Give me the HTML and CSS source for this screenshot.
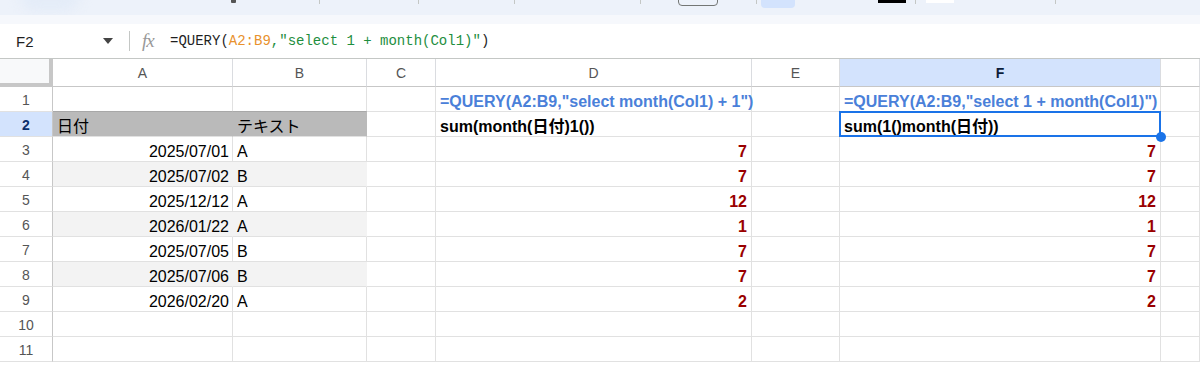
FILE: index.html
```html
<!DOCTYPE html>
<html lang="ja">
<head>
    <meta charset="UTF-8">
    <meta name="viewport" content="width=device-width, initial-scale=1.0">
    <title>QUERY month test</title>
    <link rel="stylesheet" href="styles.css">
</head>
<body>

<div class="toolbar">
    <span class="tb-glow"></span>
    <span class="tb-mark" style="left:231px"></span>
    <span class="tb-sep" style="left:319px"></span>
    <span class="tb-sep" style="left:418px"></span>
    <span class="tb-sep" style="left:514px"></span>
    <span class="tb-sep" style="left:640px"></span>
    <span class="tb-box" style="left:678px"></span>
    <span class="tb-sep" style="left:756px"></span>
    <span class="tb-active" style="left:761px"></span>
    <span class="tb-color" style="left:878px"></span>
    <span class="tb-sep" style="left:915px"></span>
    <span class="tb-white" style="left:926px"></span>
    <span class="tb-sep" style="left:1055px"></span>
</div>
<div class="toolbar-band"></div>

<div class="formula-bar">
    <div class="name-box">F2</div>
    <svg class="name-arrow" width="10" height="6" viewBox="0 0 10 6"><path d="M0 0h10L5 6z" fill="#444"/></svg>
    <div class="fb-sep"></div>
    <div class="fx">fx</div>
    <div class="formula">=QUERY(<span class="f-ref">A2:B9</span><span class="f-str">,"select 1 + month(Col1)"</span>)</div>
</div>

<div id="sheet" class="sheet">
    <!-- cells are built below -->
</div>

<script>
    // Column letters (G is cut off on the right)
    const columns = ['A', 'B', 'C', 'D', 'E', 'F', ''];

    // Sheet content, one array per row: A, B, C, D, E, F, G
    const rows = [
        ['', '', '', '=QUERY(A2:B9,"select month(Col1) + 1")', '', '=QUERY(A2:B9,"select 1 + month(Col1)")', ''],
        ['日付', 'テキスト', '', 'sum(month(日付)1())', '', 'sum(1()month(日付))', ''],
        ['2025/07/01', 'A', '', 7, '', 7, ''],
        ['2025/07/02', 'B', '', 7, '', 7, ''],
        ['2025/12/12', 'A', '', 12, '', 12, ''],
        ['2026/01/22', 'A', '', 1, '', 1, ''],
        ['2025/07/05', 'B', '', 7, '', 7, ''],
        ['2025/07/06', 'B', '', 7, '', 7, ''],
        ['2026/02/20', 'A', '', 2, '', 2, ''],
        ['', '', '', '', '', '', ''],
        ['', '', '', '', '', '', ''],
    ];

    function cellClass(r, c, value) {
        let cls = 'cell';
        if (r === 1 && c < 2) cls += ' band-head';
        else if (r >= 2 && r <= 8 && r % 2 === 1 && c < 2) cls += ' band-alt';
        if (r === 0 && (c === 3 || c === 5)) cls += ' query';
        if (r === 1 && (c === 3 || c === 5)) cls += ' label';
        if (typeof value === 'number') cls += ' num';
        if (r >= 2 && c === 0 && value !== '') cls += ' date';
        if (r === 1 && c === 5) cls += ' selected';
        return cls;
    }

    function buildSheet() {
        const sheet = document.getElementById('sheet');
        let html = '<div class="corner"></div>';

        columns.forEach((letter, c) => {
            html += `<div class="col-head${c === 5 ? ' active' : ''}">${letter}</div>`;
        });

        rows.forEach((row, r) => {
            html += `<div class="row-head${r === 1 ? ' active' : ''}">${r + 1}</div>`;
            row.forEach((value, c) => {
                html += `<div class="${cellClass(r, c, value)}"><span>${value}</span></div>`;
            });
        });

        sheet.innerHTML = html;
    }

    buildSheet();
</script>

</body>
</html>
```

FILE: styles.css
```css
body {
    margin: 0;
    padding: 0;
    width: 1200px;
    height: 365px;
    overflow: hidden;
    background-color: #fff;
    font-family: 'Liberation Sans', Arial, 'Noto Sans CJK JP', sans-serif;
    color: #000;
}

/* top toolbar, mostly cut off */
.toolbar {
    position: relative;
    height: 15px;
    background-color: #edf2fa;
    overflow: hidden;
}

.tb-glow {
    position: absolute;
    left: 20px;
    top: -20px;
    width: 60px;
    height: 32px;
    border-radius: 16px;
    background-color: #e4ecf8;
    filter: blur(6px);
}

.tb-mark {
    position: absolute;
    top: 0;
    width: 5px;
    height: 3px;
    background-color: #555;
    border-radius: 0 0 1px 1px;
}

.tb-sep {
    position: absolute;
    top: 0;
    width: 1px;
    height: 4px;
    background-color: #c4c7c5;
}

.tb-box {
    position: absolute;
    top: -6px;
    width: 38px;
    height: 10px;
    border: 1px solid #747775;
    border-radius: 4px;
}

.tb-active {
    position: absolute;
    top: -4px;
    width: 34px;
    height: 12px;
    background-color: #d3e3fd;
    border-radius: 4px;
}

.tb-color {
    position: absolute;
    top: 0;
    width: 28px;
    height: 3px;
    background-color: #000;
}

.tb-white {
    position: absolute;
    top: 0;
    width: 28px;
    height: 3px;
    background-color: #fff;
}

.toolbar-band {
    height: 9px;
    background-color: #f6f8fc;
}

/* formula bar */
.formula-bar {
    display: flex;
    align-items: center;
    height: 34px;
    border-bottom: 1px solid #c4c7c5;
    box-sizing: content-box;
}

.name-box {
    width: 87px;
    padding-left: 16px;
    font-size: 15px;
    color: #1f1f1f;
}

.fb-sep {
    width: 1px;
    height: 20px;
    margin-left: 16px;
    background-color: #c4c7c5;
}

.fx {
    margin-left: 12px;
    width: 28px;
    font-family: 'Liberation Serif', serif;
    font-style: italic;
    font-size: 19px;
    color: #999;
    letter-spacing: -1px;
}

.formula {
    font-family: 'Liberation Mono', 'DejaVu Sans Mono', monospace;
    font-size: 14px;
    color: #1f1f1f;
}

.f-ref {
    color: #e8912d;
}

.f-str {
    color: #1e8e3e;
}

/* the grid */
.sheet {
    display: grid;
    grid-template-columns: 53px 180px 134px 69px 316px 88px 321px 39px;
    grid-template-rows: 28px repeat(11, 25px);
}

.corner {
    background-color: #f8f9fa;
    border-right: 4px solid #c7c7c7;
    border-bottom: 4px solid #c7c7c7;
}

.col-head {
    display: flex;
    align-items: center;
    justify-content: center;
    font-size: 14px;
    color: #555;
    border-right: 1px solid #dadce0;
    border-bottom: 1px solid #c7c7c7;
}

.col-head.active {
    background-color: #d3e3fd;
    color: #0b1d3a;
    font-weight: bold;
}

.row-head {
    display: flex;
    align-items: center;
    justify-content: center;
    padding-top: 1px;
    font-size: 14px;
    color: #555;
    border-right: 1px solid #c7c7c7;
    border-bottom: 1px solid #e1e1e1;
}

.row-head.active {
    background-color: #d3e3fd;
    color: #0b2f6b;
    font-weight: bold;
}

.cell {
    position: relative;
    display: flex;
    align-items: flex-end;
    padding: 0 4px 0;
    font-size: 16px;
    line-height: 19px;
    white-space: nowrap;
    overflow: visible;
    border-right: 1px solid #e1e1e1;
    border-bottom: 1px solid #e1e1e1;
    min-width: 0;
}

.cell span {
    position: relative;
    z-index: 1;
}

.band-head {
    background-color: #bababa;
    border-right-color: #bababa;
    border-top: 1px solid #a8a8a8;
    margin-top: -1px;
}

.band-alt {
    background-color: #f3f3f3;
    border-right-color: #f3f3f3;
}

.date {
    justify-content: flex-end;
    padding-right: 3px;
}

.query {
    color: #4a80d9;
    font-weight: bold;
    padding-left: 4px;
}

.label {
    font-weight: bold;
}

.num {
    justify-content: flex-end;
    color: #990000;
    font-weight: bold;
    padding-right: 4px;
}

.selected::after {
    content: '';
    position: absolute;
    left: -1px;
    top: -1px;
    right: -1px;
    bottom: -1px;
    border: 2px solid #1a73e8;
    z-index: 2;
}

.selected::before {
    content: '';
    position: absolute;
    right: -6px;
    bottom: -6px;
    width: 10px;
    height: 10px;
    border-radius: 50%;
    background-color: #1a73e8;
    z-index: 3;
}
```
